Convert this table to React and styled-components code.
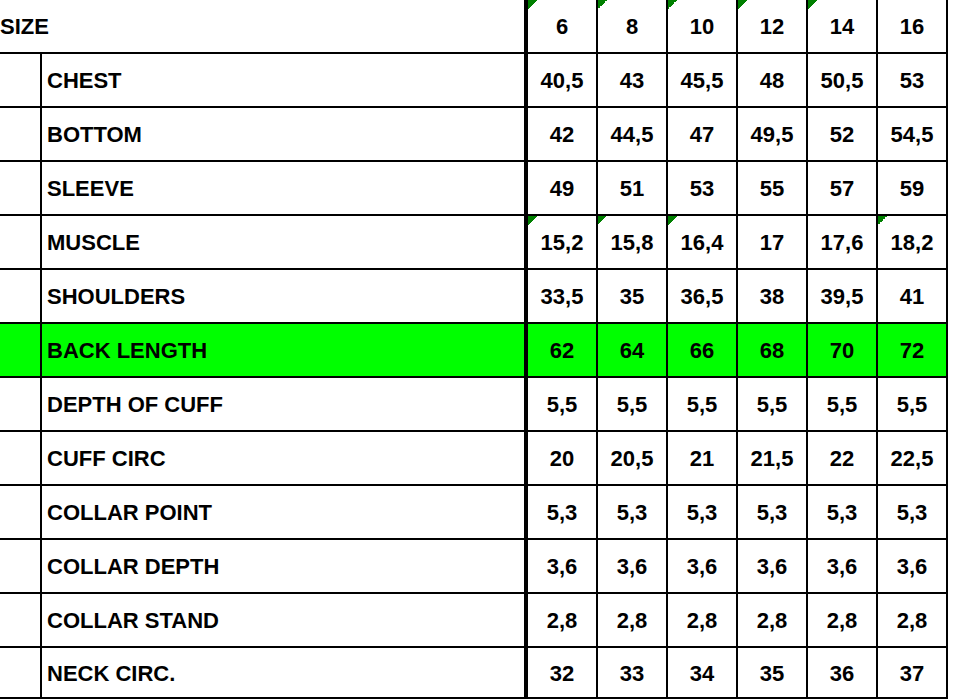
import styled, { createGlobalStyle, css } from 'styled-components';

const sizes = ['6', '8', '10', '12', '14', '16'];

const rows = [
  { label: 'CHEST', values: ['40,5', '43', '45,5', '48', '50,5', '53'] },
  { label: 'BOTTOM', values: ['42', '44,5', '47', '49,5', '52', '54,5'] },
  { label: 'SLEEVE', values: ['49', '51', '53', '55', '57', '59'] },
  { label: 'MUSCLE', values: ['15,2', '15,8', '16,4', '17', '17,6', '18,2'], marks: [0, 1, 2, 5] },
  { label: 'SHOULDERS', values: ['33,5', '35', '36,5', '38', '39,5', '41'] },
  { label: 'BACK LENGTH', values: ['62', '64', '66', '68', '70', '72'], highlight: true },
  { label: 'DEPTH OF CUFF', values: ['5,5', '5,5', '5,5', '5,5', '5,5', '5,5'] },
  { label: 'CUFF CIRC', values: ['20', '20,5', '21', '21,5', '22', '22,5'] },
  { label: 'COLLAR POINT', values: ['5,3', '5,3', '5,3', '5,3', '5,3', '5,3'] },
  { label: 'COLLAR DEPTH', values: ['3,6', '3,6', '3,6', '3,6', '3,6', '3,6'] },
  { label: 'COLLAR STAND', values: ['2,8', '2,8', '2,8', '2,8', '2,8', '2,8'] },
  { label: 'NECK CIRC.', values: ['32', '33', '34', '35', '36', '37'], last: true },
];

const headerMarks = [0, 1, 2, 3, 4];

const GlobalStyle = createGlobalStyle`
  html, body {
    margin: 0;
    padding: 0;
    background: #fff;
    overflow: hidden;
  }
  body {
    font-family: "Liberation Sans", Arial, sans-serif;
  }
`;

const Sheet = styled.div`
  width: 956px;
  height: 700px;
  overflow: hidden;
`;

const Table = styled.div`
  display: flex;
  flex-direction: column;
  margin-left: -8px;
  width: max-content;
`;

const Row = styled.div`
  display: flex;
  height: ${(p) => (p.$last ? '49px' : '52px')};
  border-bottom: 2px solid #000;
  background: ${(p) => (p.$highlight ? '#00ff00' : 'transparent')};
  color: #000;
  font-weight: bold;
  font-size: 22px;
  line-height: 1;
`;

const Blank = styled.div`
  width: 48px;
  border-right: 2px solid #000;
`;

const Label = styled.div`
  width: 477px;
  padding: 2px 0 0 5px;
  display: flex;
  align-items: center;
  border-right: 4px solid #000;
`;

const SizeLabel = styled(Label)`
  width: 524px;
  padding-left: 8px;
`;

const Num = styled.div`
  position: relative;
  width: 68px;
  padding-top: 2px;
  display: flex;
  align-items: center;
  justify-content: center;
  border-right: 2px solid #000;

  ${(p) =>
    p.$mark &&
    css`
      &::before {
        content: '';
        position: absolute;
        top: 0;
        left: 0;
        width: 9px;
        height: 9px;
        background: linear-gradient(135deg, #008000 50%, transparent 50%);
      }
    `}
`;

const App = () => {
  return (
    <Sheet>
      <GlobalStyle />
      <Table>
        <Row>
          <SizeLabel>SIZE</SizeLabel>
          {sizes.map((s, i) => (
            <Num key={s} $mark={headerMarks.includes(i)}>
              {s}
            </Num>
          ))}
        </Row>
        {rows.map((r) => (
          <Row key={r.label} $highlight={r.highlight} $last={r.last}>
            <Blank />
            <Label>{r.label}</Label>
            {r.values.map((v, i) => (
              <Num key={i} $mark={r.marks && r.marks.includes(i)}>
                {v}
              </Num>
            ))}
          </Row>
        ))}
      </Table>
    </Sheet>
  );
};

export default App;
